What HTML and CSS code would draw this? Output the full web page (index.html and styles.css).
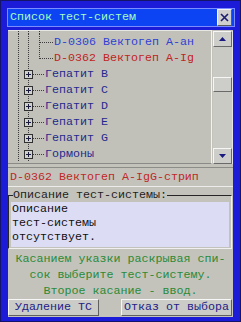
FILE: index.html
```html
<!DOCTYPE html>
<html>
<head>
<meta charset="utf-8">
<link rel="stylesheet" href="styles.css">
</head>
<body>
<div class="win">
  <div class="titlebar">
    <span class="title">Список тест-систем</span>
    <span class="close"><svg width="13" height="15" viewBox="0 0 13 15"><path d="M3 4 L10 11 M10 4 L3 11" stroke="#1a1a70" stroke-width="1.6"/></svg></span>
  </div>
  <div class="panel">
    <div class="treebox">
      <div class="tree">
        <div class="pad"><svg width="52" height="3"><g class="dl"><line x1="10.5" y1="0" x2="10.5" y2="3"/><line x1="20.5" y1="0" x2="20.5" y2="3"/><line x1="31.5" y1="0" x2="31.5" y2="3"/></g></svg></div>
        <div class="row leaf"><svg width="45" height="16"><g class="dl"><line x1="10.5" y1="0" x2="10.5" y2="16"/><line x1="20.5" y1="0" x2="20.5" y2="16"/><line x1="31.5" y1="0" x2="31.5" y2="16"/><line x1="32" y1="8.5" x2="45" y2="8.5"/></g></svg><span class="t-blue">D-0306 Вектогеп А-ан</span></div>
        <div class="row leaf"><svg width="45" height="16"><g class="dl"><line x1="10.5" y1="0" x2="10.5" y2="16"/><line x1="20.5" y1="0" x2="20.5" y2="16"/><line x1="31.5" y1="0" x2="31.5" y2="9"/><line x1="32" y1="8.5" x2="45" y2="8.5"/></g></svg><span class="t-red">D-0362 Вектогеп A-Ig</span></div>
        <div class="row node"><svg width="37" height="16"><g class="dl"><line x1="10.5" y1="0" x2="10.5" y2="16"/><line x1="20.5" y1="0" x2="20.5" y2="16"/><line x1="25" y1="8.5" x2="37" y2="8.5"/></g><rect class="box" x="16.5" y="4.5" width="8" height="8"/><path class="plus" d="M18 8.5 H23 M20.5 6 V11"/></svg><span class="t-navy">Гепатит B</span></div>
        <div class="row node"><svg width="37" height="16"><g class="dl"><line x1="10.5" y1="0" x2="10.5" y2="16"/><line x1="20.5" y1="0" x2="20.5" y2="16"/><line x1="25" y1="8.5" x2="37" y2="8.5"/></g><rect class="box" x="16.5" y="4.5" width="8" height="8"/><path class="plus" d="M18 8.5 H23 M20.5 6 V11"/></svg><span class="t-navy">Гепатит C</span></div>
        <div class="row node"><svg width="37" height="16"><g class="dl"><line x1="10.5" y1="0" x2="10.5" y2="16"/><line x1="20.5" y1="0" x2="20.5" y2="16"/><line x1="25" y1="8.5" x2="37" y2="8.5"/></g><rect class="box" x="16.5" y="4.5" width="8" height="8"/><path class="plus" d="M18 8.5 H23 M20.5 6 V11"/></svg><span class="t-navy">Гепатит D</span></div>
        <div class="row node"><svg width="37" height="16"><g class="dl"><line x1="10.5" y1="0" x2="10.5" y2="16"/><line x1="20.5" y1="0" x2="20.5" y2="16"/><line x1="25" y1="8.5" x2="37" y2="8.5"/></g><rect class="box" x="16.5" y="4.5" width="8" height="8"/><path class="plus" d="M18 8.5 H23 M20.5 6 V11"/></svg><span class="t-navy">Гепатит E</span></div>
        <div class="row node"><svg width="37" height="16"><g class="dl"><line x1="10.5" y1="0" x2="10.5" y2="16"/><line x1="20.5" y1="0" x2="20.5" y2="16"/><line x1="25" y1="8.5" x2="37" y2="8.5"/></g><rect class="box" x="16.5" y="4.5" width="8" height="8"/><path class="plus" d="M18 8.5 H23 M20.5 6 V11"/></svg><span class="t-navy">Гепатит G</span></div>
        <div class="row node"><svg width="37" height="16"><g class="dl"><line x1="10.5" y1="0" x2="10.5" y2="16"/><line x1="20.5" y1="0" x2="20.5" y2="16"/><line x1="25" y1="8.5" x2="37" y2="8.5"/></g><rect class="box" x="16.5" y="4.5" width="8" height="8"/><path class="plus" d="M18 8.5 H23 M20.5 6 V11"/></svg><span class="t-navy">Гормоны</span></div>
      </div>
      <div class="scroll">
        <div class="sbtn"><svg width="9" height="6" viewBox="0 0 9 6"><path d="M4.5 1 L8 5 H1 Z" fill="#1a1a80"/></svg></div>
        <div class="track"><div class="thumb"></div></div>
        <div class="sbtn"><svg width="9" height="6" viewBox="0 0 9 6"><path d="M1 1 H8 L4.5 5 Z" fill="#1a1a80"/></svg></div>
      </div>
    </div>
    <div class="status">D-0362 Вектогеп A-IgG-стрип</div>
    <fieldset class="group">
      <legend>Описание тест-системы:</legend>
      <div class="desc">Описание<br>тест-системы<br>отсутствует.</div>
    </fieldset>
    <div class="hint">Касанием указки раскрывая спи-<br>сок выберите тест-систему.<br>Второе касание - ввод.</div>
    <div class="buttons">
      <div class="btn btn-del">Удаление ТС</div>
      <div class="btn btn-cancel">Отказ от выбора</div>
    </div>
  </div>
</div>
</body>
</html>
```
FILE: styles.css
```css
html, body {
  margin: 0;
  padding: 0;
  background: #1c1cd8;
}
body {
  font-family: "Liberation Mono", "DejaVu Sans Mono", monospace;
  font-size: 11.67px;
}
.win {
  width: 241px;
  height: 322px;
  box-sizing: border-box;
  background: #1c1cd8;
  border: 1px solid #14146a;
  padding: 7px 7px 4px 6px;
  display: flex;
  flex-direction: column;
}
.titlebar {
  height: 19px;
  box-sizing: border-box;
  margin-right: -2px;
  border: 1px solid #7a8cff;
  background: #0c44f4;
  display: flex;
  align-items: stretch;
  justify-content: space-between;
}
.title {
  color: #a6ffc2;
  line-height: 17px;
  padding-left: 2px;
}
.close {
  width: 15px;
  box-sizing: border-box;
  margin-right: 2px;
  background: #cfcfcf;
  border-top: 1px solid #f4f4f4;
  border-left: 1px solid #f4f4f4;
  border-right: 1px solid #5a5a5a;
  border-bottom: 1px solid #5a5a5a;
  display: flex;
  align-items: center;
  justify-content: center;
}
.panel {
  margin-top: 3px;
  margin-left: 1px;
  flex: 1;
  background: #c3c3bb;
  display: flex;
  flex-direction: column;
}
.treebox {
  height: 134px;
  display: flex;
}
.tree {
  flex: 1;
  box-sizing: border-box;
  border-top: 1px solid #e6e6e2;
  border-right: 1px solid #f2f2f0;
  border-bottom: 1px solid #8a8a86;
  background: #c1c1b9;
  overflow: hidden;
}
.pad {
  height: 3px;
  display: flex;
}
.row {
  height: 16px;
  display: flex;
  align-items: center;
  line-height: 16px;
  white-space: nowrap;
}
.row svg, .pad svg {
  flex: none;
  display: block;
}
.dl line {
  stroke: #3c3c3c;
  stroke-width: 1;
  stroke-dasharray: 1 1;
  shape-rendering: crispEdges;
}
.box {
  fill: #d0d0cc;
  stroke: #303030;
  stroke-width: 1;
  shape-rendering: crispEdges;
}
.plus {
  stroke: #1a1a40;
  stroke-width: 1;
  shape-rendering: crispEdges;
}
.t-blue { color: #2f42d4; padding-left: 1px; }
.t-red { color: #c02424; padding-left: 1px; }
.t-navy { color: #25298f; }
.scroll {
  width: 20px;
  margin-left: 1px;
  margin-top: 1px;
  box-sizing: border-box;
  display: flex;
  flex-direction: column;
  background: #cacac4;
  border-right: 1px solid #e4e4e4;
}
.sbtn {
  height: 16px;
  box-sizing: border-box;
  background: #cdcdc9;
  border-top: 1px solid #f6f6f6;
  border-left: 1px solid #f6f6f6;
  border-right: 1px solid #6a6a6a;
  border-bottom: 1px solid #6a6a6a;
  display: flex;
  align-items: center;
  justify-content: center;
}
.track {
  flex: 1;
  padding-top: 30px;
}
.thumb {
  height: 15px;
  box-sizing: border-box;
  background: #cdcdc9;
  border-top: 1px solid #f6f6f6;
  border-left: 1px solid #f6f6f6;
  border-right: 1px solid #6a6a6a;
  border-bottom: 1px solid #6a6a6a;
}
.status {
  margin-top: 3px;
  height: 20px;
  box-sizing: border-box;
  border-top: 1px solid #8c8c88;
  border-bottom: 1px solid #ececea;
  color: #c02828;
  line-height: 18px;
  padding-left: 2px;
  white-space: nowrap;
}
.group {
  margin: 2px 1px 0 0;
  padding: 1px 2px 1px 2px;
  border: 1px solid #262626;
  border-right-color: #f0f0f0;
  border-bottom-color: #f0f0f0;
  height: 60px;
  box-sizing: border-box;
  min-width: 0;
}
.group legend {
  padding: 0;
  margin-left: 2px;
  color: #1e1e1e;
  line-height: 12px;
  white-space: nowrap;
}
.desc {
  background: #dcdcf4;
  height: 45px;
  box-sizing: border-box;
  line-height: 14px;
  padding-left: 1px;
  color: #101010;
}
.hint {
  margin-top: 2px;
  height: 48px;
  line-height: 16px;
  text-align: center;
  color: #2a8a36;
  white-space: nowrap;
}
.buttons {
  height: 17px;
  margin-bottom: 1px;
  display: flex;
  justify-content: space-between;
}
.btn {
  box-sizing: border-box;
  background: #cbcbc7;
  border-top: 1px solid #f6f6f6;
  border-left: 1px solid #f6f6f6;
  border-right: 1px solid #606060;
  border-bottom: 1px solid #606060;
  color: #222288;
  line-height: 15px;
  text-align: center;
  white-space: nowrap;
}
.btn-del { width: 91px; }
.btn-cancel { width: 111px; margin-right: 1px; }
```
